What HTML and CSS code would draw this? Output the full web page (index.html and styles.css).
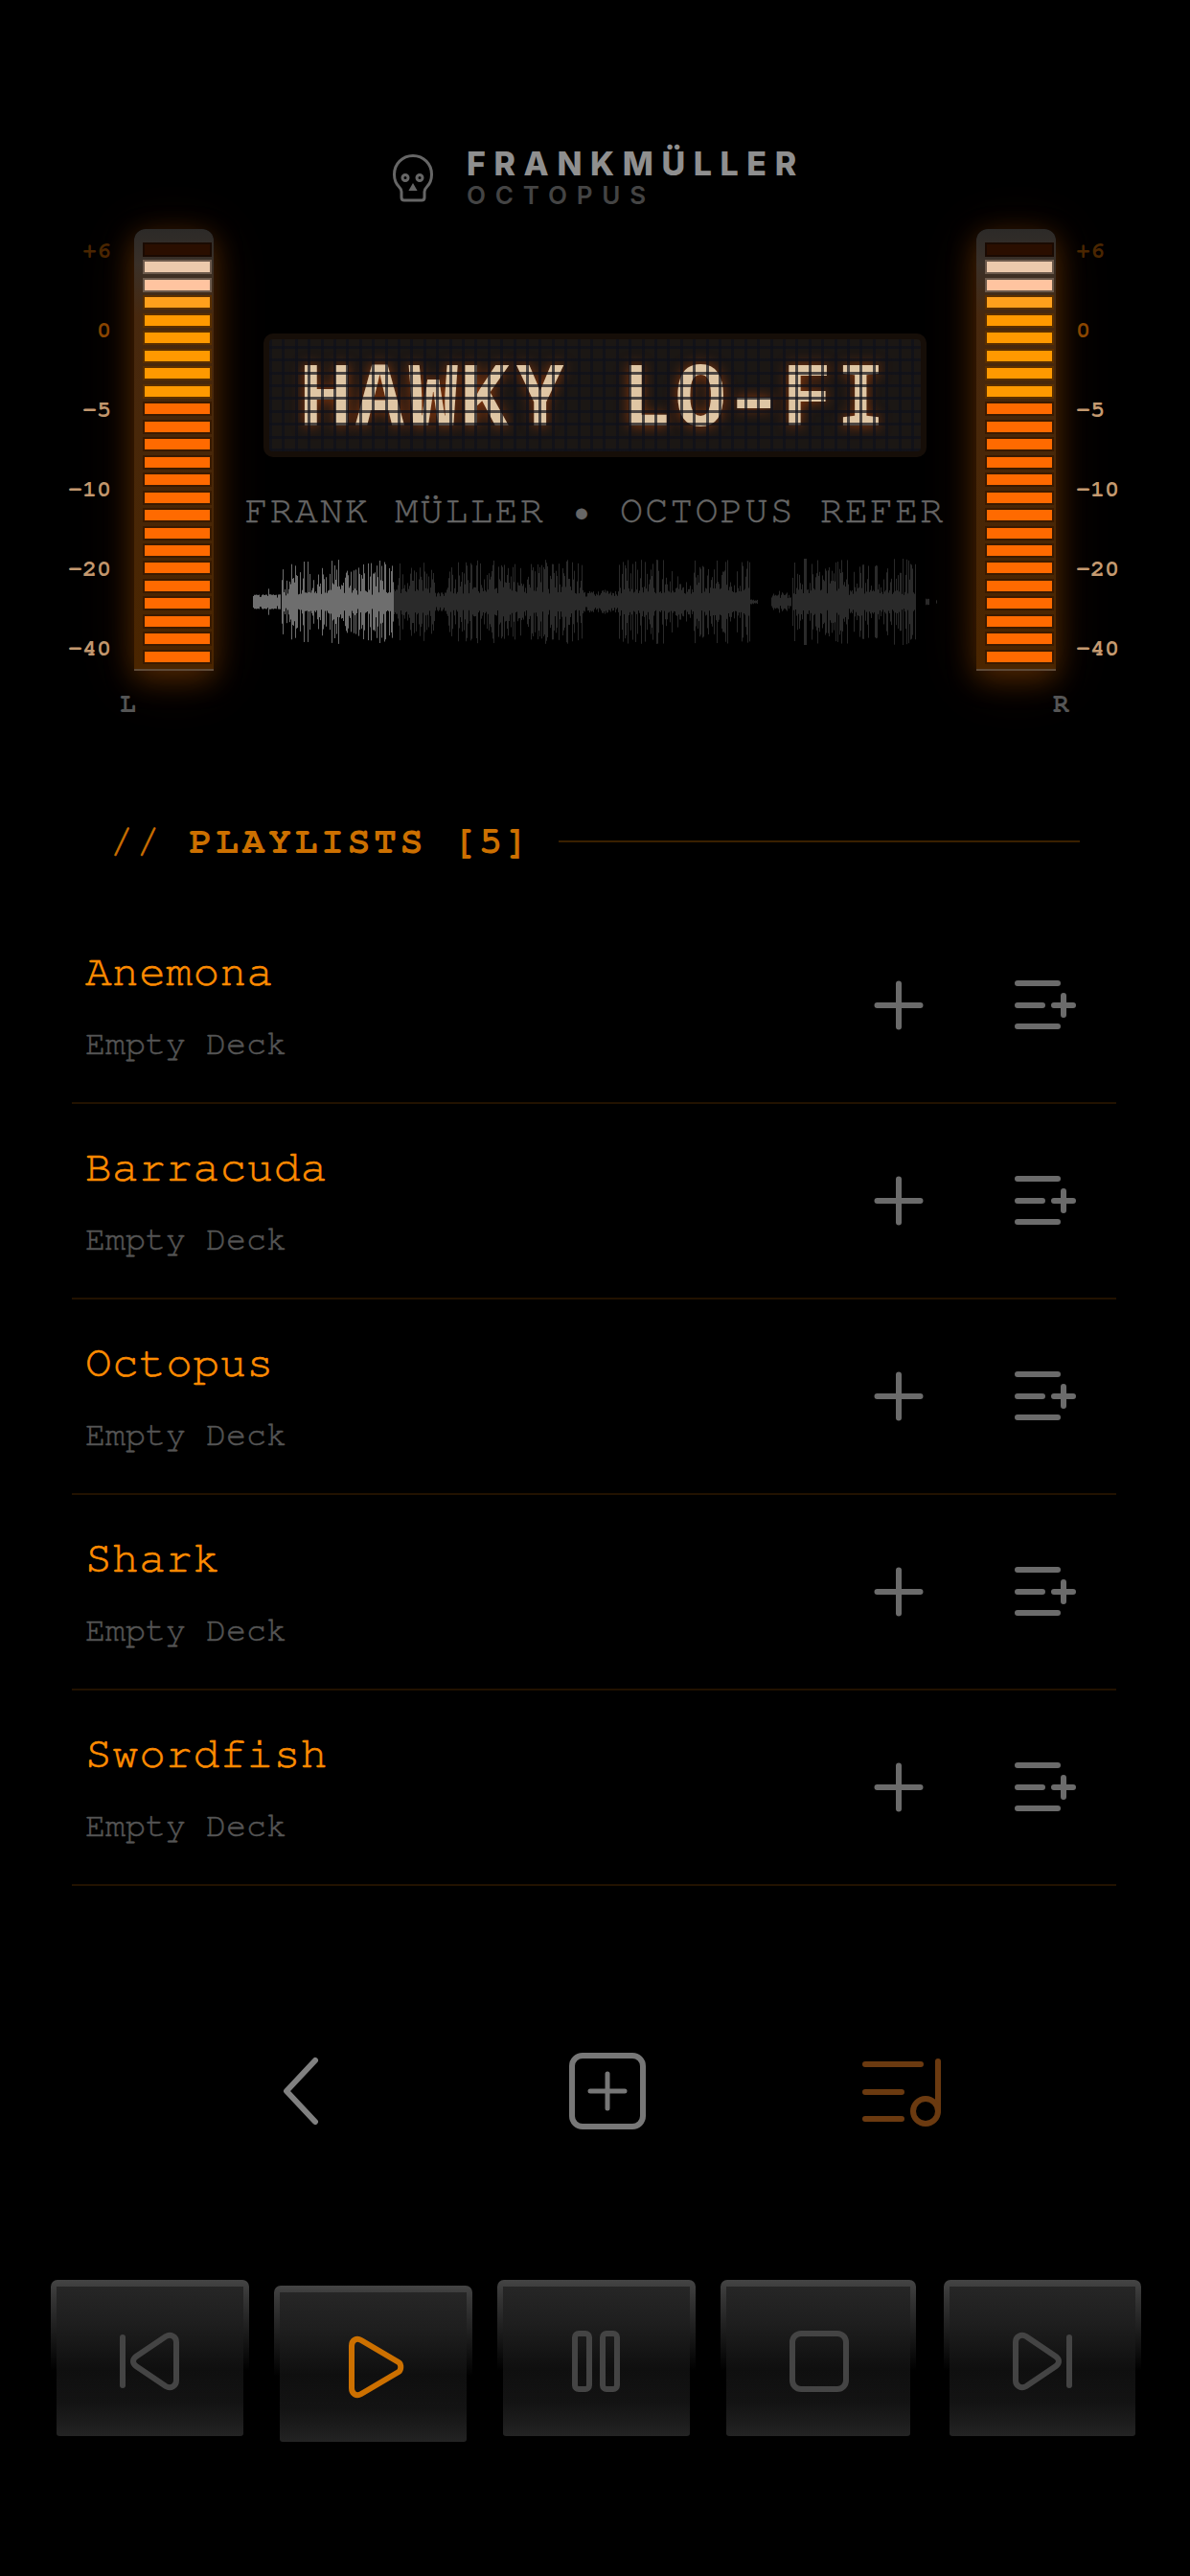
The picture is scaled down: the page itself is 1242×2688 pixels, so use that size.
FILE: index.html
```html
<!DOCTYPE html>
<html lang="en">
<head>
    <meta charset="UTF-8">
    <meta name="viewport" content="width=device-width, initial-scale=1.0">
    <title>Hawky Lo-Fi</title>
    <link rel="stylesheet" href="styles.css">
</head>
<body>
    <!-- Shared icons -->
    <svg class="icon-defs" width="0" height="0">
        <symbol id="icon-plus" viewBox="0 0 56 56">
            <path d="M28 5.500v45M5.500 28h45"/>
        </symbol>
        <symbol id="icon-list-plus" viewBox="0 0 70 56">
            <path d="M6 5h42M6 28h26M6 50h42M44 28h20M54 18v20"/>
        </symbol>
    </svg>

    <div class="app">
        <!-- Brand -->
        <header class="brand">
            <svg class="brand-skull" viewBox="0 0 42 50">
                <path d="M21 1.5C10 1.5 1.5 10 1.5 21c0 6 2 10 5 13 2 2 2.500 3 2.500 5v6c0 2 1 3 3 3h18c2 0 3-1 3-3v-6c0-2 .5-3 2.500-5 3-3 5-7 5-13C40.500 10 32 1.500 21 1.500z"/>
                <circle cx="13" cy="24.500" r="3"/>
                <circle cx="28" cy="24.500" r="3"/>
                <path d="M21 33l2 3.500h-4z"/>
            </svg>
            <div class="brand-text">
                <div class="brand-name">FRANKMÜLLER</div>
                <div class="brand-sub">OCTOPUS</div>
            </div>
        </header>

        <!-- Meters and display -->
        <section class="deck">
            <div class="meter-group">
                <div class="scale scale-left">
                    <span class="tick-faint">+6</span>
                    <span class="tick-mid">0</span>
                    <span>-5</span>
                    <span>-10</span>
                    <span>-20</span>
                    <span>-40</span>
                </div>
                <div class="meter">
                    <i class="bar bar-off"></i><i class="bar bar-peak bar-dim"></i><i class="bar bar-peak"></i>
                    <i class="bar bar-amber bar-first"></i><i class="bar bar-amber"></i><i class="bar bar-amber"></i><i class="bar bar-amber"></i><i class="bar bar-amber"></i><i class="bar bar-amber"></i>
                    <i class="bar"></i><i class="bar"></i><i class="bar"></i><i class="bar"></i><i class="bar"></i>
                    <i class="bar"></i><i class="bar"></i><i class="bar"></i><i class="bar"></i><i class="bar"></i>
                    <i class="bar"></i><i class="bar"></i><i class="bar"></i><i class="bar"></i><i class="bar"></i>
                </div>
            </div>

            <div class="deck-center">
                <div class="display"><span class="display-text">HAWKY LO–FI</span></div>
                <div class="track-line">FRANK MÜLLER • OCTOPUS REFER</div>
                <svg class="waveform" id="waveform" viewBox="0 0 720 90" width="720" height="90"></svg>
            </div>

            <div class="meter-group meter-group-right">
                <div class="meter">
                    <i class="bar bar-off"></i><i class="bar bar-peak bar-dim"></i><i class="bar bar-peak"></i>
                    <i class="bar bar-amber bar-first"></i><i class="bar bar-amber"></i><i class="bar bar-amber"></i><i class="bar bar-amber"></i><i class="bar bar-amber"></i><i class="bar bar-amber"></i>
                    <i class="bar"></i><i class="bar"></i><i class="bar"></i><i class="bar"></i><i class="bar"></i>
                    <i class="bar"></i><i class="bar"></i><i class="bar"></i><i class="bar"></i><i class="bar"></i>
                    <i class="bar"></i><i class="bar"></i><i class="bar"></i><i class="bar"></i><i class="bar"></i>
                </div>
                <div class="scale">
                    <span class="tick-faint">+6</span>
                    <span class="tick-mid">0</span>
                    <span>-5</span>
                    <span>-10</span>
                    <span>-20</span>
                    <span>-40</span>
                </div>
            </div>
        </section>

        <div class="channels">
            <span>L</span>
            <span>R</span>
        </div>

        <!-- Playlists -->
        <div class="section-title">
            <span><span class="section-slashes">//</span> <b>PLAYLISTS [5]</b></span>
            <span class="section-rule"></span>
        </div>

        <ul class="playlist">
            <li class="playlist-row">
                <div class="playlist-info">
                    <div class="playlist-name">Anemona</div>
                    <div class="playlist-meta">Empty Deck</div>
                </div>
                <svg class="row-plus"><use href="#icon-plus"/></svg>
                <svg class="row-queue"><use href="#icon-list-plus"/></svg>
            </li>
            <li class="playlist-row">
                <div class="playlist-info">
                    <div class="playlist-name">Barracuda</div>
                    <div class="playlist-meta">Empty Deck</div>
                </div>
                <svg class="row-plus"><use href="#icon-plus"/></svg>
                <svg class="row-queue"><use href="#icon-list-plus"/></svg>
            </li>
            <li class="playlist-row">
                <div class="playlist-info">
                    <div class="playlist-name">Octopus</div>
                    <div class="playlist-meta">Empty Deck</div>
                </div>
                <svg class="row-plus"><use href="#icon-plus"/></svg>
                <svg class="row-queue"><use href="#icon-list-plus"/></svg>
            </li>
            <li class="playlist-row">
                <div class="playlist-info">
                    <div class="playlist-name">Shark</div>
                    <div class="playlist-meta">Empty Deck</div>
                </div>
                <svg class="row-plus"><use href="#icon-plus"/></svg>
                <svg class="row-queue"><use href="#icon-list-plus"/></svg>
            </li>
            <li class="playlist-row">
                <div class="playlist-info">
                    <div class="playlist-name">Swordfish</div>
                    <div class="playlist-meta">Empty Deck</div>
                </div>
                <svg class="row-plus"><use href="#icon-plus"/></svg>
                <svg class="row-queue"><use href="#icon-list-plus"/></svg>
            </li>
        </ul>

        <!-- Toolbar -->
        <nav class="toolbar">
            <svg class="tool-back" viewBox="0 0 40 72"><path d="M35 4L5 36l30 32"/></svg>
            <svg class="tool-add" viewBox="0 0 84 84"><rect x="5" y="5" width="74" height="74" rx="11"/><path class="tool-add-cross" d="M42 24v36M24 42h36"/></svg>
            <svg class="tool-music" viewBox="0 0 84 84"><path d="M3 14h58M3 43h38M3 71h38M79 11v52"/><circle cx="66" cy="63" r="13"/></svg>
        </nav>

        <!-- Transport -->
        <div class="transport">
            <button class="key">
                <span class="key-face">
                    <svg class="key-icon key-icon-prev" viewBox="0 0 66 64"><path d="M5 12c0-6 6-9 11-6l31 21c4 3 4 7 0 10L16 58c-5 3-11 0-11-6z"/><path d="M61 7v50"/></svg>
                </span>
            </button>
            <button class="key key-active">
                <span class="key-face">
                    <svg class="key-icon key-icon-play" viewBox="0 0 60 68"><path d="M4 12c0-6 5-9 10-6l39 23c3 2 3 8 0 10L14 62c-5 3-10 0-10-6z"/></svg>
                </span>
            </button>
            <button class="key">
                <span class="key-face">
                    <svg class="key-icon" viewBox="0 0 66 68"><rect x="11" y="5" width="15" height="58" rx="4"/><rect x="40" y="5" width="15" height="58" rx="4"/></svg>
                </span>
            </button>
            <button class="key key-narrow">
                <span class="key-face">
                    <svg class="key-icon" viewBox="0 0 66 68"><rect x="5" y="5" width="56" height="58" rx="9"/></svg>
                </span>
            </button>
            <button class="key">
                <span class="key-face">
                    <svg class="key-icon" viewBox="0 0 66 64"><path d="M5 12c0-6 6-9 11-6l31 21c4 3 4 7 0 10L16 58c-5 3-11 0-11-6z"/><path d="M61 7v50"/></svg>
                </span>
            </button>
        </div>
    </div>

    <script src="script.js"></script>
</body>
</html>
```

FILE: styles.css
```css
* {
    margin: 0;
    padding: 0;
    box-sizing: border-box;
}

body {
    background-color: #000;
    font-family: FreeMono, "Liberation Mono", monospace;
}

.icon-defs {
    position: absolute;
}

.app {
    width: 1242px;
    height: 2688px;
    overflow: hidden;
}

/* Brand */
.brand {
    display: flex;
    align-items: center;
    gap: 35px;
    height: 239px;
    padding: 163px 0 31px 410px;
}

.brand-skull {
    width: 42px;
    height: 50px;
    fill: none;
    stroke: #666;
    stroke-width: 3;
    overflow: visible;
}

.brand-text {
    font-family: Inter, sans-serif;
}

.brand-name {
    font-size: 34px;
    font-weight: 800;
    line-height: 36px;
    letter-spacing: 8.6px;
    color: #8f8f8f;
}

.brand-sub {
    font-size: 26px;
    font-weight: 600;
    line-height: 30px;
    letter-spacing: 9.800px;
    color: #444;
}

/* Meters */
.deck {
    display: flex;
    height: 461px;
}

.meter-group {
    display: flex;
    gap: 24px;
    width: 223px;
    padding-left: 56px;
    flex-shrink: 0;
}

.meter-group-right {
    gap: 21px;
    width: 223px;
    padding-left: 0;
}

.scale {
    display: flex;
    flex-direction: column;
    gap: 59px;
    width: 60px;
    padding-top: 11px;
    font-size: 25px;
    font-weight: bold;
    line-height: 24px;
    color: #c49a70;
}

.scale-left {
    align-items: flex-end;
}

.tick-faint {
    color: #4a2600;
}

.tick-mid {
    color: #8a4600;
}

.meter {
    display: flex;
    flex-direction: column;
    justify-content: space-between;
    flex-shrink: 0;
    width: 83px;
    height: 461px;
    padding: 14px 2px 5px 9px;
    border-radius: 12px 12px 0 0;
    border-bottom: 2px solid #5e4a38;
    background: linear-gradient(#2c2a28 0, #3a3028 8%, #47280e 20%, #4a2500 100%);
    box-shadow: 0 8px 30px rgba(170, 80, 0, 0.42), 0 8px 60px rgba(150, 70, 0, 0.22);
}

.bar {
    display: block;
    height: 15px;
    background-color: #ff6a00;
    border: 2px solid #3a1a00;
}

.bar-amber {
    background-color: #ff9900;
    border-color: #5a2f00;
}

.bar-first {
    background-color: #ffa01c;
}

.bar-peak {
    background-color: #ffc4a0;
    border-color: #6c5a4c;
}

.bar-dim {
    background-color: #eccaac;
}

.bar-off {
    background-color: #2a0e00;
    border-color: #1a0a02;
}

/* Display */
.deck-center {
    flex: 1;
    display: flex;
    flex-direction: column;
    align-items: center;
    min-width: 0;
    padding-top: 109px;
}

.display {
    position: relative;
    display: flex;
    align-items: center;
    justify-content: center;
    flex-shrink: 0;
    width: 692px;
    height: 129px;
    padding-bottom: 5px;
    overflow: hidden;
    border: 6px solid #160e08;
    border-radius: 10px;
    background-color: #1b1714;
}

.display::after {
    content: "";
    position: absolute;
    inset: 0;
    background-image:
        repeating-linear-gradient(90deg, rgba(14, 16, 26, 0.7) 0 3px, transparent 3px 13.400px),
        repeating-linear-gradient(0deg, rgba(14, 16, 26, 0.7) 0 3px, transparent 3px 13.400px);
}

.display-text {
    font-family: "Noto Sans Mono", monospace;
    font-size: 88px;
    font-weight: 700;
    line-height: 1;
    letter-spacing: 3px;
    white-space: pre;
    color: #dfc6a4;
    text-shadow: 0 0 14px rgba(255, 90, 0, 0.5);
}

.track-line {
    margin-top: 36px;
    font-size: 40px;
    line-height: 40px;
    letter-spacing: 2.100px;
    white-space: nowrap;
    color: #666;
    -webkit-text-stroke: 0.4px #666;
}

.waveform {
    flex-shrink: 0;
    margin-top: 30px;
}

.channels {
    display: flex;
    justify-content: space-between;
    height: 50px;
    padding: 20px 126px 0 125px;
    font-size: 28px;
    font-weight: bold;
    line-height: 30px;
    color: #555;
}

/* Playlists */
.section-title {
    display: flex;
    align-items: center;
    gap: 28px;
    height: 110px;
    padding: 0 115px 0 115px;
    margin-top: 73px;
    font-size: 40px;
    letter-spacing: 3.500px;
    color: #cc7000;
    white-space: pre;
}

.section-slashes {
    -webkit-text-stroke: 0.6px #cc7000;
}

.section-rule {
    flex: 1;
    height: 2px;
    background-color: #3a2000;
}

.playlist {
    list-style: none;
    margin: 15px 77px 0 75px;
}

.playlist-row {
    display: flex;
    align-items: center;
    height: 204px;
    padding-left: 14px;
    border-bottom: 2px solid #221200;
}

.playlist-info {
    flex: 1;
}

.playlist-name {
    font-size: 46px;
    line-height: 48px;
    letter-spacing: 0.500px;
    color: #ff8c00;
    -webkit-text-stroke: 0.6px #ff8c00;
}

.playlist-meta {
    margin-top: 34px;
    font-size: 35px;
    line-height: 36px;
    color: #555;
    -webkit-text-stroke: 0.5px #555;
}

.row-plus,
.row-queue {
    fill: none;
    stroke: #6b6b6b;
    stroke-width: 6;
    stroke-linecap: round;
    flex-shrink: 0;
    overflow: visible;
}

.row-plus {
    width: 56px;
    height: 56px;
}

.row-queue {
    width: 70px;
    height: 56px;
    margin: 0 39px 0 90px;
}

/* Toolbar */
.toolbar {
    display: flex;
    align-items: center;
    height: 84px;
    margin-top: 172px;
    padding-left: 294px;
}

.toolbar svg {
    flex-shrink: 0;
    fill: none;
    stroke-width: 6;
    stroke-linecap: round;
    stroke-linejoin: round;
}

.tool-back {
    width: 40px;
    height: 72px;
    stroke: #808080;
}

.tool-add {
    width: 84px;
    height: 84px;
    margin-left: 258px;
    stroke: #777;
}

.toolbar .tool-add-cross {
    stroke-width: 5;
}

.tool-music {
    width: 84px;
    height: 84px;
    margin-left: 224px;
    stroke: #6b3a10;
}

/* Transport */
.transport {
    display: flex;
    align-items: flex-start;
    gap: 26.500px;
    margin-top: 155px;
    padding-left: 53px;
}

.key {
    display: block;
    flex-shrink: 0;
    width: 206.500px;
    height: 163px;
    padding: 7px 6px 0;
    border: none;
    border-radius: 7px 7px 0 0;
    background: linear-gradient(#444 0, #363636 10%, #000 58%);
}

.key-active {
    margin-top: 6px;
}

.key-narrow {
    width: 203.500px;
    margin-right: 2.500px;
}

.key-narrow .key-icon {
    margin-left: 3px;
}

.key-face {
    display: flex;
    align-items: center;
    justify-content: center;
    height: 100%;
    border-radius: 0 0 3px 3px;
    background: linear-gradient(#262626 0, #1e1e1e 25%, #0f0f0f 55%, #131313 78%, #232323 100%);
}

.key-icon {
    width: 66px;
    height: 68px;
    fill: none;
    stroke: #444;
    stroke-width: 6;
    stroke-linecap: round;
}

.key-icon-prev {
    transform: scaleX(-1);
}

.key-icon-play {
    width: 60px;
    margin-left: 8px;
    stroke: #cc7000;
}
```

FILE: script.js
```js
// Waveform drawing, one thin bar per pixel column
const svg = document.getElementById('waveform');
const playedUpTo = 150;

// [start, end, body height, spike height]
const segments = [
    [3, 32, 7, 8],
    [18, 20, 7, 42],
    [33, 54, 10, 42],
    [54, 150, 12, 44],
    [150, 193, 14, 42],
    [193, 205, 8, 10],
    [205, 347, 14, 44],
    [347, 385, 9, 13],
    [385, 522, 14, 44],
    [522, 530, 2, 3],
    [544, 565, 6, 12],
    [566, 695, 12, 46],
    [705, 709, 2, 4],
    [716, 717, 1, 2]
];

// small seeded random so the picture stays the same on each load
let seed = 42;
function rand() {
    seed = (seed * 16807) % 2147483647;
    return seed / 2147483647;
}

let played = '';
let rest = '';

segments.forEach(([start, end, body, spike]) => {
    for (let x = start; x < end; x += 1) {
        const h = rand() > 0.35 ? body + rand() * (spike - body) : body * (0.6 + rand() * 0.5);
        const line = `M${x + 0.5} ${45 - h}V${45 + h}`;
        if (x < playedUpTo) {
            played += line;
        } else {
            rest += line;
        }
    }
});

svg.innerHTML = `<path d="${played}" stroke="#6e6e6e" stroke-width="1" fill="none"/>`
    + `<path d="${rest}" stroke="#2a2a2a" stroke-width="1" fill="none"/>`;
```
